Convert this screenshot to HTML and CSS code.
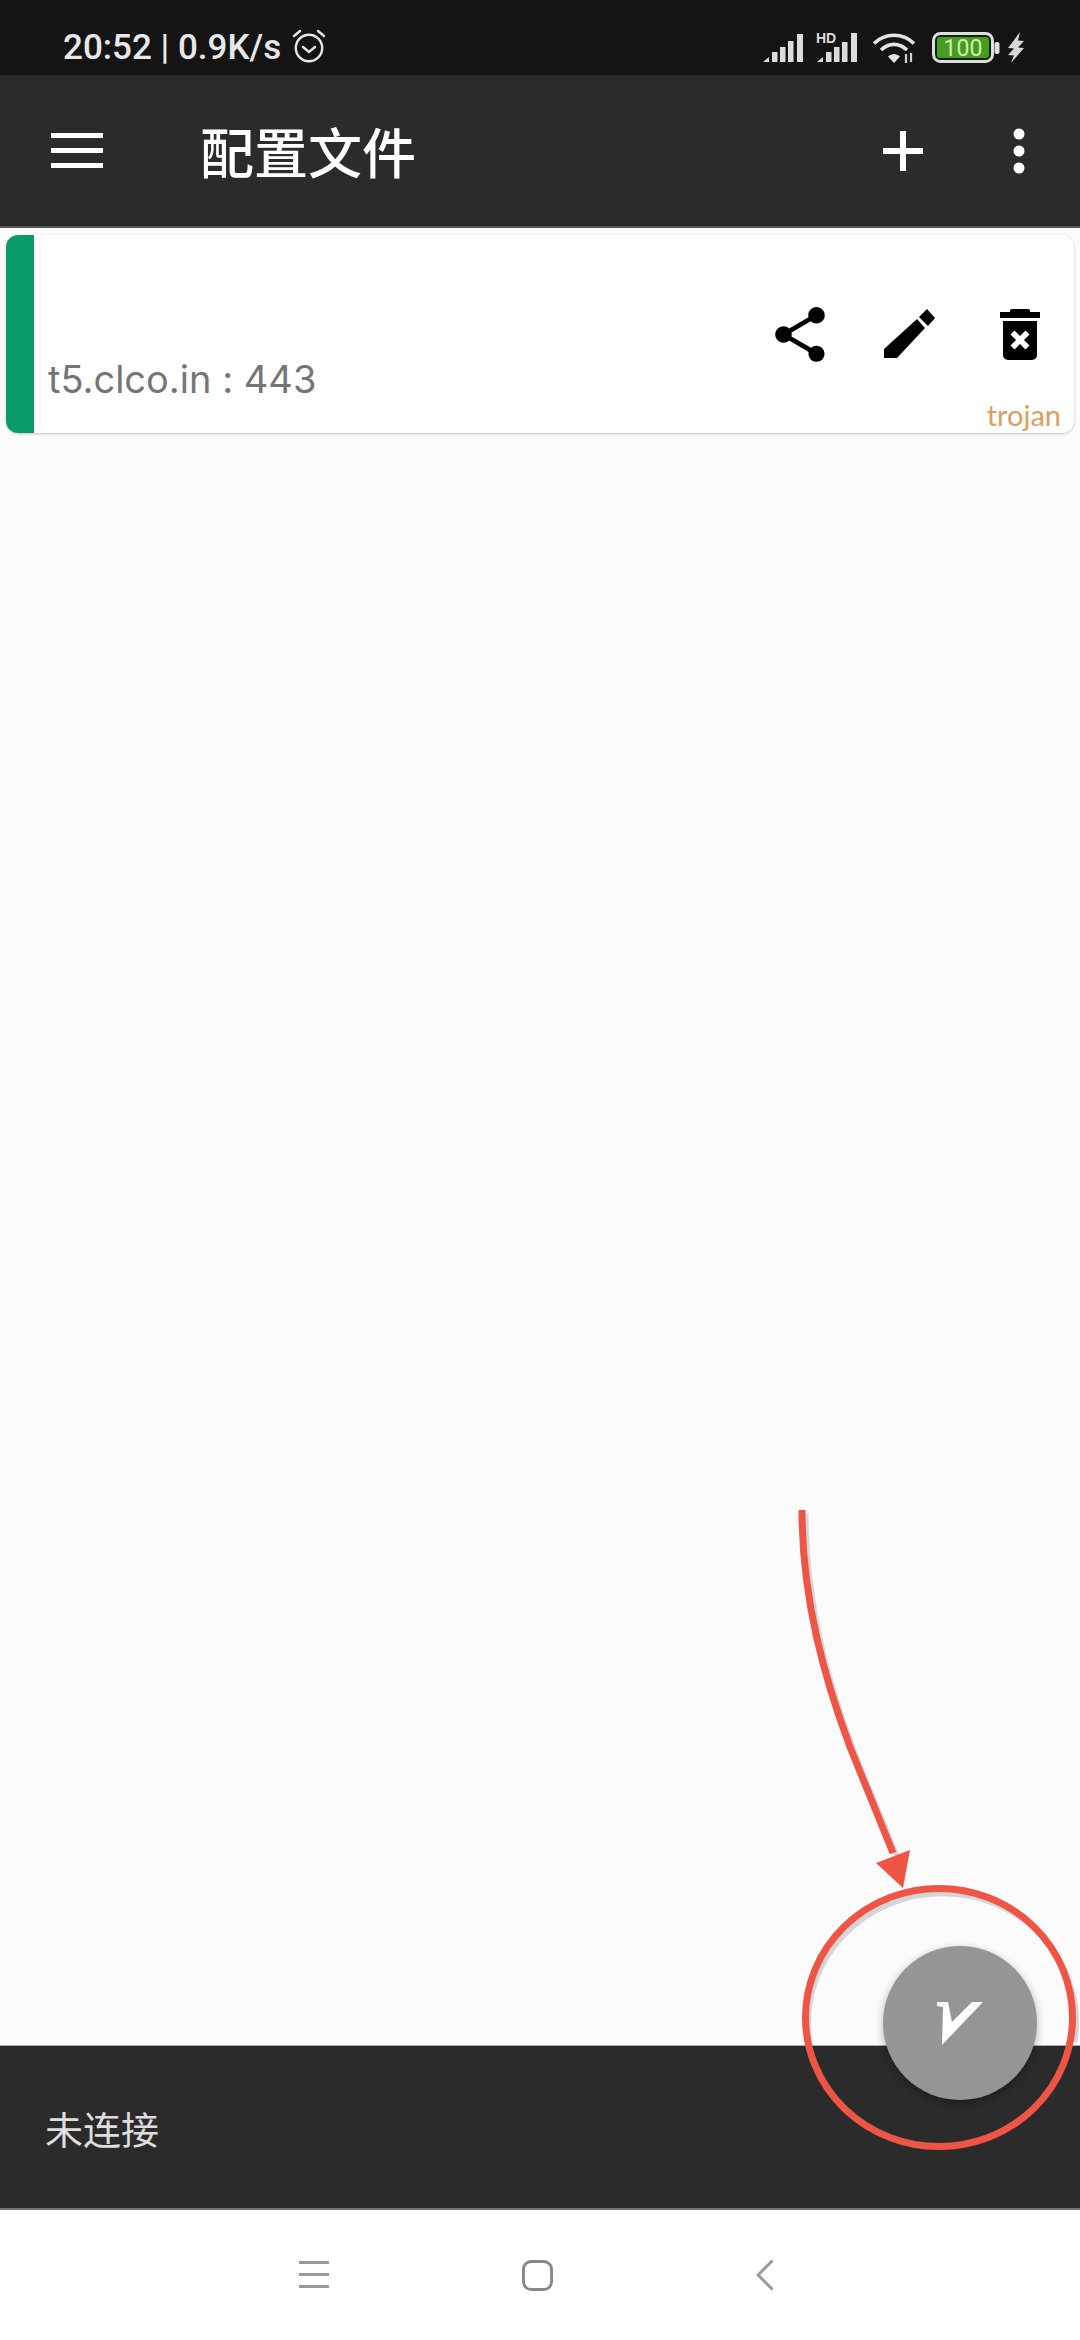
FILE: index.html
```html
<!DOCTYPE html>
<html lang="zh">
<head>
<meta charset="utf-8">
<title>配置文件</title>
<link rel="stylesheet" href="styles.css">
</head>
<body>
<div class="screen">
  <header class="statusbar">
    <div class="status-left">
      <span class="clock">20:52 | 0.9K/s</span>
      <svg class="alarm" viewBox="0 0 34 34" width="34" height="34"><g fill="none" stroke="#e6e6e6" stroke-width="2.4" stroke-linecap="round"><circle cx="17" cy="19" r="13.2"/><path d="M11 18l6 5 6-5"/><path d="M2 7l6-5M32 7l-6-5"/></g></svg>
    </div>
    <div class="status-right">
      <svg class="sig" viewBox="0 0 40 30" width="40" height="30"><g fill="#dcdcdc"><path d="M0 29l6-5v5z"/><rect x="9" y="19" width="5.500" height="10"/><rect x="17" y="14" width="5.500" height="15"/><rect x="25" y="8" width="5.500" height="21"/><rect x="34" y="1" width="6" height="28"/></g></svg>
      <svg class="sig2" viewBox="0 0 44 32" width="44" height="32"><text x="0" y="10.500" class="hd">HD</text><g fill="#dcdcdc"><path d="M1 30l6-5v5z"/><rect x="10" y="20" width="5.500" height="10"/><rect x="18" y="15" width="5.500" height="15"/><rect x="26" y="10" width="5.500" height="20"/><rect x="35" y="1" width="6" height="29"/></g></svg>
      <svg class="wifi" viewBox="0 0 44 32" width="44" height="32"><g fill="none" stroke="#e4e4e4" stroke-width="3.6"><path d="M1 11.500C12 .5 30 .5 41 11.500"/><path d="M8 18c8-7.500 18-7.500 26 0"/></g><path d="M15 24.500c4-3.400 8-3.400 12 0L21 31z" fill="#e4e4e4"/><g fill="none" stroke="#cfcfcf" stroke-width="2.200"><path d="M33 22v9M38 21v9"/></g></svg>
      <svg class="battery" viewBox="0 0 68 32" width="68" height="32"><rect x="1.500" y="1.500" width="59" height="28" rx="7" fill="#11240a" stroke="#dedede" stroke-width="3"/><rect x="5" y="5" width="52" height="21" rx="3" fill="#4a9a1f"/><text x="31" y="24" class="batt-text">100</text><rect x="62.500" y="10" width="5" height="12" rx="2" fill="#dedede"/></svg>
      <svg class="bolt" viewBox="0 0 18 32" width="18" height="32"><path d="M13 0L1 16l6 .5L1 23l6 .5L4 31l13-15-6-.5 6-6.500-6-.500z" fill="#d8d8d8"/></svg>
    </div>
  </header>

  <nav class="toolbar">
    <svg class="menu" viewBox="0 0 52 36" width="52" height="36"><g fill="#fff"><rect y="0" width="52" height="5"/><rect y="15" width="52" height="5"/><rect y="30" width="52" height="5"/></g></svg>
    <h1 class="title">配置文件</h1>
    <div class="toolbar-actions">
      <svg class="plus" viewBox="0 0 40 40" width="40" height="40"><path d="M17 0h6v17h17v6H23v17h-6V23H0v-6h17z" fill="#fff"/></svg>
      <svg class="dots" viewBox="0 0 12 46" width="12" height="46"><g fill="#fff"><circle cx="6" cy="6" r="5.500"/><circle cx="6" cy="23" r="5.500"/><circle cx="6" cy="40" r="5.500"/></g></svg>
    </div>
  </nav>

  <main class="content">
    <article class="card">
      <div class="card-stripe"></div>
      <div class="card-body">
        <div class="server">t5.clco.in : 443</div>
        <div class="card-actions">
          <svg class="act-share" viewBox="3 2 18 20" width="50" height="55"><path d="M18 16.080c-.76 0-1.440.3-1.960.77L8.910 12.700c.05-.23.09-.46.09-.7s-.04-.47-.09-.7l7.050-4.110c.54.5 1.250.81 2.040.81 1.660 0 3-1.340 3-3s-1.340-3-3-3-3 1.340-3 3c0 .24.040.47.090.7L8.040 9.810C7.500 9.310 6.790 9 6 9c-1.660 0-3 1.340-3 3s1.340 3 3 3c.79 0 1.500-.31 2.040-.81l7.120 4.160c-.05.21-.08.43-.08.650 0 1.610 1.310 2.920 2.920 2.920s2.920-1.310 2.920-2.920-1.310-2.920-2.920-2.920z"/></svg>
          <svg class="act-edit" viewBox="0 0 52 52" width="52" height="52"><path d="M0 40L33 10l8 9L13 49H0zM35 8l8-8 8 9-7 8z"/></svg>
          <svg class="act-del" viewBox="0 0 40 51" width="40" height="51"><path d="M0 3h10v-1q0-2 2-2h16q2 0 2 2v1h10v6H0z"/><path fill-rule="evenodd" d="M3 12h34v34a5 5 0 0 1-5 5H8a5 5 0 0 1-5-5zM20 27l-5.500-5.500-4 4L16 31l-5.500 5.500 4 4L20 35l5.500 5.500 4-4L24 31l5.500-5.500-4-4z"/></svg>
        </div>
      </div>
      <span class="protocol">trojan</span>
    </article>
  </main>

  <footer class="connbar"><span class="conn-text">未连接</span></footer>

  <div class="navbar">
    <svg viewBox="0 0 30 28" width="30" height="28"><g fill="#999"><rect y="0" width="30" height="3"/><rect y="12" width="30" height="3"/><rect y="24" width="30" height="3"/></g></svg>
    <svg viewBox="0 0 32 32" width="31" height="31"><rect x="1.500" y="1.500" width="29" height="29" rx="8" fill="none" stroke="#888" stroke-width="3"/></svg>
    <svg class="nav-back" viewBox="0 0 18 32" width="18" height="32"><path d="M16.500 1.500L2 16l14.500 14.500" fill="none" stroke="#999" stroke-width="3"/></svg>
  </div>

  <button class="fab" aria-label="连接">
    <svg viewBox="0 0 46 43" width="46" height="43"><path d="M0 0h11l4 20L35 0h11L5 43l1-38-6-1z" fill="#fff"/></svg>
  </button>

  <svg class="annotation" viewBox="0 0 1080 2340" width="1080" height="2340">
    <g fill="none" stroke="#d5d6d8" stroke-width="5">
      <path d="M806 1514C806 1604 829 1684 854 1751L898 1858"/>
      <path d="M810 2042A134 129 0 1 1 1075 2042"/>
    </g>
    <g fill="none" stroke="#ee5545" stroke-width="7">
      <path d="M802 1510C802 1600 825 1680 850 1747L893 1853"/>
      <ellipse cx="939" cy="2017.500" rx="133.500" ry="129"/>
    </g>
    <path d="M876 1863L910 1850L903 1888z" fill="#ee5545"/>
  </svg>
</div>
</body>
</html>
```
FILE: styles.css
```css
* { box-sizing: border-box; }
html, body { margin: 0; padding: 0; }
body { width: 1080px; height: 2340px; overflow: hidden; background: #fbfbfc; font-family: Roboto, "Noto Sans CJK SC", sans-serif; }
.screen { position: relative; width: 1080px; height: 2340px; display: flex; flex-direction: column; }

.statusbar { height: 75px; background: #141414; display: flex; align-items: center; justify-content: space-between; padding: 20px 55px 0 63px; flex: none; }
.status-left { display: flex; align-items: center; gap: 11px; }
.clock { font-size: 35px; font-weight: 500; color: #e8e8e8; white-space: nowrap; line-height: 1; }
.alarm { margin-top: -3px; }
.status-right { display: flex; align-items: center; gap: 13px; }
.sig2 { overflow: visible; }
.hd { font: 700 14px "Liberation Sans", sans-serif; fill: #dcdcdc; }
.batt-text { font: 400 23px Roboto, sans-serif; fill: #c9f0b4; text-anchor: middle; }
.battery { margin-left: 2px; }
.bolt { margin-left: -6px; }

.toolbar { height: 153px; background: #2b2b2b; display: flex; align-items: center; padding: 0 55px 0 51px; flex: none; border-bottom: 2px solid #55585a; }
.title { margin: 0 0 0 97px; font: 500 54px "Noto Sans CJK SC", sans-serif; color: #fff; flex: 1; line-height: 1; }
.toolbar-actions { display: flex; align-items: center; gap: 90px; }

.content { flex: 1; padding: 7px 6px 0 6px; background: #fbfbfc; }
.card { position: relative; height: 198px; background: #fff; border-radius: 12px; box-shadow: 0 1px 3px rgba(0,0,0,.22); display: flex; }
.card-stripe { width: 28px; background: #0a9a68; border-radius: 12px 0 0 12px; flex: none; }
.card-body { flex: 1; display: flex; justify-content: space-between; padding: 72px 34px 0 14px; }
.server { font: 400 38px Inter, sans-serif; font-feature-settings: "calt" 0; color: #757575; align-self: flex-end; padding-bottom: 35px; line-height: 1; white-space: nowrap; }
.card-actions { display: flex; gap: 59px; height: 55px; align-items: center; }
.act-del { margin-left: 5px; }
.protocol { position: absolute; right: 13px; bottom: 1px; font: 400 29px Lato, sans-serif; color: #d9a05e; }

.connbar { height: 165px; background: #2b2b2b; display: flex; align-items: center; padding-left: 45px; flex: none; border-top: 1px solid #aaa; border-bottom: 2px solid #777; }
.conn-text { font: 400 38px "Noto Sans CJK SC", sans-serif; color: #dedede; }

.navbar { height: 130px; background: #fff; flex: none; display: flex; align-items: center; padding-left: 299px; gap: 193px; }
.nav-back { margin-left: 10px; }

.fab { position: absolute; left: 883px; top: 1946px; width: 154px; height: 154px; border-radius: 50%; border: 0; padding: 0; background: #959595; box-shadow: 0 3px 8px rgba(0,0,0,.3); display: flex; align-items: center; justify-content: center; }
.annotation { position: absolute; left: 0; top: 0; pointer-events: none; }
```
